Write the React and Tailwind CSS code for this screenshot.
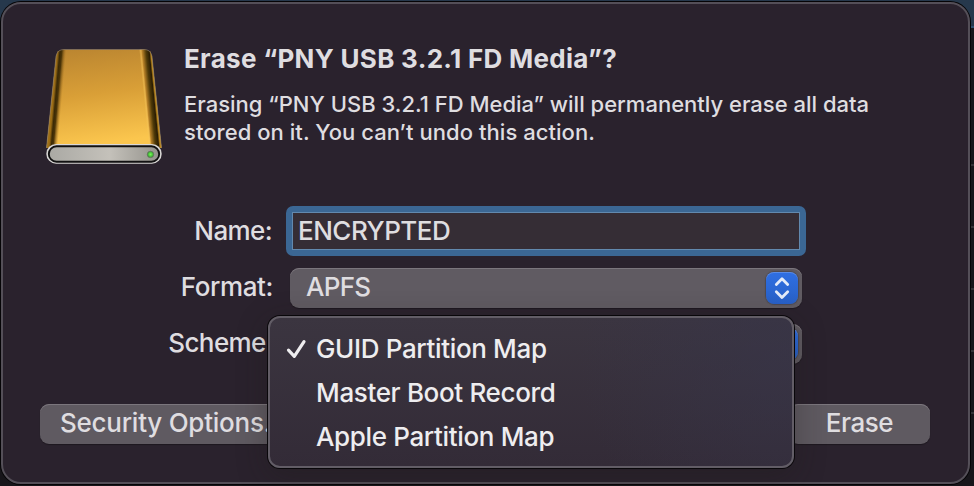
const BACKDROP_LINES = ["a", "b", "c", "d", "e"];

function DriveIcon() {
  return (
    <svg width="124" height="124" viewBox="0 0 124 124" className="block">
      <defs>
        <linearGradient id="gold" x1="0" y1="0" x2="0.15" y2="1">
          <stop offset="0" stopColor="#b98430" />
          <stop offset="0.5" stopColor="#d99f37" />
          <stop offset="1" stopColor="#fbc64e" />
        </linearGradient>
        <linearGradient id="silver" x1="0" y1="0" x2="1" y2="0">
          <stop offset="0" stopColor="#aaa9a4" />
          <stop offset="0.55" stopColor="#c4c1ba" />
          <stop offset="1" stopColor="#94928c" />
        </linearGradient>
        <linearGradient id="edgeL" gradientUnits="userSpaceOnUse" x1="9" y1="56" x2="20" y2="57">
          <stop offset="0" stopColor="#a87516" />
          <stop offset="0.22" stopColor="#9a6c16" />
          <stop offset="0.42" stopColor="#3a2905" />
          <stop offset="0.6" stopColor="#4a3408" />
          <stop offset="1" stopColor="#a87420" stopOpacity="0" />
        </linearGradient>
        <linearGradient id="edgeR" gradientUnits="userSpaceOnUse" x1="115" y1="56" x2="102" y2="57.300">
          <stop offset="0" stopColor="#c08a1c" />
          <stop offset="0.12" stopColor="#c08a1c" />
          <stop offset="0.24" stopColor="#2a1d03" />
          <stop offset="0.48" stopColor="#4f3a08" />
          <stop offset="0.78" stopColor="#b98228" />
          <stop offset="0.88" stopColor="#f0be55" stopOpacity="0.6" />
          <stop offset="1" stopColor="#ffd060" stopOpacity="0" />
        </linearGradient>
        <radialGradient id="led">
          <stop offset="0" stopColor="#7df05a" />
          <stop offset="0.6" stopColor="#48cc3a" />
          <stop offset="1" stopColor="#477a40" />
        </radialGradient>
      </defs>
      <path d="M22 7.500H102Q109 7.500 110 14.500L119.500 106H4.500L14 14.500Q15 7.500 22 7.500Z" fill="url(#gold)" />
      <path d="M22 7.500H40V106H4.500L14 14.500Q15 7.500 22 7.500Z" fill="url(#edgeL)" />
      <path d="M84 7.500H102Q109 7.500 110 14.500L119.500 106H84Z" fill="url(#edgeR)" />
      <path d="M4.500 106L14 14.500Q15 7.500 22 7.500H102Q109 7.500 110 14.500L119.500 106" fill="none" stroke="#8a7d70" strokeWidth="0.600" />
      <rect x="4.300" y="102" width="115.400" height="19.700" rx="9.800" fill="#d9d7d5" />
      <rect x="6.800" y="104.300" width="110.400" height="15.400" rx="7.700" fill="url(#silver)" stroke="#111" strokeWidth="1.900" />
      <circle cx="108.500" cy="112.400" r="3.200" fill="url(#led)" stroke="#5f7658" strokeWidth="0.700" />
    </svg>
  );
}

function Stepper() {
  return (
    <span className="flex h-8 w-8 items-center justify-center rounded-[8px] bg-linear-to-b from-[#2f6fe3] to-[#2860c6] shadow-[0_0_1px_1px_rgba(40,40,50,0.35),inset_0_1px_0_rgba(255,255,255,0.2)]">
      <svg width="32" height="32" viewBox="0 0 32 32" fill="none" stroke="#e4ebf8" strokeWidth="2.800" strokeLinecap="round" strokeLinejoin="round">
        <path d="M10.300 12.500L16 6.700L21.700 12.500M10.300 19.700L16 25.500L21.700 19.700" />
      </svg>
    </span>
  );
}

function Popup({ children }) {
  return (
    <div className="ml-[17px] flex h-10 w-[512px] items-center justify-between rounded-[9px] bg-[#605b62] pr-1 pl-4 shadow-[inset_0_1px_0_#7b767d,0_1px_1px_rgba(0,0,0,0.3)]">
      <span className="relative -top-px tracking-[-0.7px]">{children}</span>
      <Stepper />
    </div>
  );
}

function MenuItem({ checked, children }) {
  return (
    <li className="flex h-11 items-center">
      <span className="flex w-[46px] justify-start pl-[14px]">
        {checked && (
          <svg width="24" height="24" viewBox="0 0 24 24" fill="none" stroke="#eeedef" strokeWidth="3.200" strokeLinecap="round" strokeLinejoin="round">
            <path d="M4.500 13.200L10.300 19.300L20 4.700" />
          </svg>
        )}
      </span>
      <span className="whitespace-nowrap tracking-[-0.35px]">{children}</span>
    </li>
  );
}

export default function App() {
  return (
    <div className="relative h-[486px] w-[974px] overflow-hidden bg-[#17151a] font-['Inter','Liberation_Sans',sans-serif] text-[26px] leading-8 font-[450] text-[#dfdde0]">
      <div className="h-[28px] border-b-2 border-[#2f4f70] bg-[#26384c]" />
      <div className="flex flex-col gap-[60px] pt-[136px]">
        {BACKDROP_LINES.map((line) => (
          <div key={line} className="h-[2px] bg-[#343237]" />
        ))}
      </div>
      <main className="absolute top-[2px] left-px h-[482px] w-[969px] rounded-[20px] border-2 border-[#544f58] bg-[#2a222d] shadow-[0_0_0_1px_#050406]">
        <header className="flex pt-[38px] pl-[39px]">
          <DriveIcon />
          <div className="pl-[18px]">
            <h1 className="h-9 text-[26px] leading-[34px] font-bold tracking-[0.3px] whitespace-nowrap">Erase “PNY USB 3.2.1 FD Media”?</h1>
            <p className="pt-[12px] text-[22px] leading-7 whitespace-nowrap">
              Erasing “PNY USB 3.2.1 FD Media” will permanently erase all data<br />
              <span className="tracking-[0.05px]">stored on it. You can’t undo this action.</span>
            </p>
          </div>
        </header>
        <section className="flex flex-col">
          <div className="mt-[40px] flex h-[50px] items-center">
            <label className="w-[269px] text-right tracking-[-0.6px]">Name:</label>
            <div className="ml-[14px] flex h-[50px] w-[520px] items-center rounded-[7px] bg-[#3b6794] p-[6px]">
              <div className="flex h-[38px] w-full items-center border border-[#6289ae] bg-[#352d35] pl-[5px] tracking-[-0.5px]">ENCRYPTED</div>
            </div>
          </div>
          <div className="mt-3 flex h-10 items-center">
            <label className="relative -top-px w-[270px] text-right tracking-[-0.4px]">Format:</label>
            <Popup>APFS</Popup>
          </div>
          <div className="mt-4 flex h-10 items-center">
            <label className="relative -top-px w-[270px] text-right tracking-[-0.6px]">Scheme:</label>
            <Popup />
          </div>
        </section>
        <footer className="mt-10 flex justify-between pr-[38px] pl-[37px]">
          <button className="h-10 w-[260px] rounded-[9px] bg-[#5f5a61] pl-[20px] text-left tracking-[-0.25px] shadow-[inset_0_1px_0_#7b767d,0_1px_1px_rgba(0,0,0,0.3)]"><span className="relative -top-px">Security Options...</span></button>
          <button className="h-10 w-[141px] rounded-[9px] bg-[#5f5a61] tracking-[-0.45px] shadow-[inset_0_1px_0_#7b767d,0_1px_1px_rgba(0,0,0,0.3)]"><span className="relative -top-px">Erase</span></button>
        </footer>
      </main>
      <ul className="absolute top-[316px] left-[268px] h-[152px] w-[526px] rounded-[12px] border-2 border-[#625d66] bg-[radial-gradient(circle_at_100%_25%,#37354a99_0%,transparent_40%),linear-gradient(#3b3540,#332b37)] pt-[9px] text-[#eeedef] shadow-[0_0_0_1px_#09070a,0_8px_30px_2px_rgba(30,28,22,0.3)]">
        <MenuItem checked>GUID Partition Map</MenuItem>
        <MenuItem>Master Boot Record</MenuItem>
        <MenuItem>Apple Partition Map</MenuItem>
      </ul>
    </div>
  );
}
